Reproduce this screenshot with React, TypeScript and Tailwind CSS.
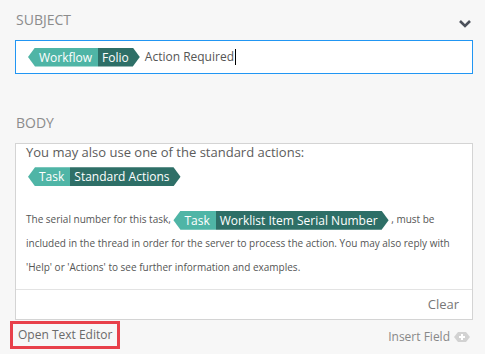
import React from 'react';

const tagShape =
  '[clip-path:polygon(0_50%,7px_0,calc(100%_-_7px)_0,100%_50%,calc(100%_-_7px)_100%,7px_100%)]';

const Tag = ({ kind, label }: { kind: string; label: string }) => (
  <span
    className={`inline-flex h-[19px] items-stretch align-middle text-[12px] font-medium leading-[19px] text-white ${tagShape}`}
  >
    <span className="bg-[#4fb5a6] pl-[11px] pr-[6px]">{kind}</span>
    <span className="bg-[#2e6f67] pl-[4px] pr-[11px]">{label}</span>
  </span>
);

const InsertIcon = () => (
  <svg width="16" height="10" viewBox="0 0 16 10">
    <path d="M0 5 L4 0 H12 L16 5 L12 10 H4 Z" fill="#d2d2d2" />
    <path d="M8 2 V8 M5 5 H11" stroke="#fff" strokeWidth="2" />
  </svg>
);

const App = () => {
  return (
    <div
      className="flex h-[354px] w-[485px] flex-col bg-[#f7f7f7] pl-[15px] pr-[12px] text-[#555]"
      style={{ fontFamily: '"Open Sans", "Liberation Sans", sans-serif' }}
    >
      <div className="flex items-center justify-between pt-[10px]">
        <span className="pl-[1px] text-[14px] leading-[20px] text-[#8c8c8c]">SUBJECT</span>
        <svg width="14" height="10" viewBox="0 0 14 10" className="mr-[1px] mt-[8px]">
          <polyline points="2,2 7,7 12,2" fill="none" stroke="#4b505a" strokeWidth="2.6" />
        </svg>
      </div>

      <div className="mt-[10px] flex h-[34px] items-center border border-[#2196f3] bg-white pl-[12px]">
        <Tag kind="Workflow" label="Folio" />
        <span className="ml-[5px] text-[12px] text-[#555]">Action Required</span>
        <span className="ml-[1px] h-[16px] w-[1px] bg-black" />
      </div>

      <div className="pl-[1px] pt-[39px] text-[14px] leading-[20px] text-[#8c8c8c]">BODY</div>

      <div className="mt-[10px] flex h-[177px] flex-col border border-[#d4d4d4] bg-white">
        <div className="flex-1 overflow-hidden pl-[10px] pr-[10px]">
          <div className="text-[13px] leading-[16px] text-[#5c5c5c]">
            You may also use one of the standard actions:
          </div>
          <div className="mt-[3px] pl-[2px]">
            <Tag kind="Task" label="Standard Actions" />
          </div>
          <p className="mt-[20px] text-[10px] leading-[24px] text-[#555]">
            The serial number for this task,{' '}
            <Tag kind="Task" label="Worklist Item Serial Number" /> , must be
            <br />
            included in the thread in order for the server to process the action. You may also reply with
            <br />
            'Help' or 'Actions' to see further information and examples.
          </p>
        </div>
        <div className="flex h-[30px] items-center justify-end border-t border-[#e3e3e3] pr-[13px] text-[13px] text-[#777]">
          Clear
        </div>
      </div>

      <div className="flex items-start justify-between">
        <div className="-ml-[5px] mt-[1px] border-[3px] border-[#e8404a] px-[5px] py-[2px] text-[12px] leading-[18px] text-[#6a6a6a]">
          Open Text Editor
        </div>
        <div className="mr-[3px] mt-[8px] flex items-center gap-[4px] text-[12px] leading-[18px] text-[#888]">
          Insert Field
          <InsertIcon />
        </div>
      </div>
    </div>
  );
};

export default App;
